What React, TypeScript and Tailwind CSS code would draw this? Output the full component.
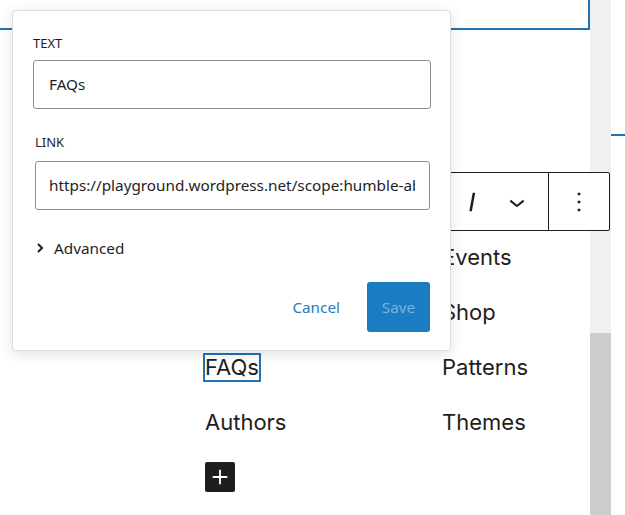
import React from "react";

const ui = { fontFamily: '"Noto Sans", "Open Sans", sans-serif' };
const site = { fontFamily: 'Inter, "Noto Sans", sans-serif' };

const leftItems = ["Docs", "News", "FAQs", "Authors"];
const rightItems = ["Events", "Shop", "Patterns", "Themes"];

const LinkPopover: React.FC = () => {
	return (
		<div
			className="absolute left-[12px] top-[10px] w-[439px] h-[341px] bg-white border border-[#dcdcdc] rounded-[4px] shadow-[0_3px_14px_rgba(0,0,0,0.12)] px-[20px] pt-[23px] text-[#1e1e1e]"
			style={ui}
		>
			<div className="text-[13px] leading-[16px] h-[16px] mt-[1px]">TEXT</div>
			<div className="mt-[9px] h-[49px] border border-[#8f8f8f] rounded-[3px] flex items-center px-[15px] text-[15.3px] w-[398px]">
				FAQs
			</div>

			<div className="text-[13px] leading-[16px] h-[16px] mt-[25px] ml-[2px]">LINK</div>
			<div className="mt-[11px] ml-[2px] h-[49px] w-[395px] border border-[#8f8f8f] rounded-[3px] flex items-center pl-[13px] pr-[14px] text-[15.3px] whitespace-nowrap">
				<span className="overflow-hidden block">https://playground.wordpress.net/scope:humble-abyss</span>
			</div>

			{/* Advanced toggle */}
			<div className="mt-[27px] flex items-center gap-[10px] ml-[2px] h-[22px]">
				<svg width="8" height="12" viewBox="0 0 8 12" className="ml-[1px]">
					<path d="M2 2l4 4-4 4" stroke="#1e1e1e" strokeWidth="2" fill="none" />
				</svg>
				<span className="text-[15.3px]">Advanced</span>
			</div>

			<div className="mt-[23px] flex justify-end items-center gap-[27px]">
				<span className="text-[15.3px] text-[#2b7bb7] mt-[1px]">Cancel</span>
				<div className="w-[63px] h-[50px] rounded-[3px] bg-[#1a7cc1] text-[#78b2dc] text-[15.3px] flex items-center justify-center">
					Save
				</div>
			</div>
		</div>
	);
};

const BlockToolbar: React.FC = () => {
	return (
		<div className="absolute left-[380px] top-[172px] w-[230px] h-[59px] bg-white border border-[#1e1e1e] rounded-[2px] flex">
			<div className="flex-1 flex items-center justify-end pr-[15px] gap-[13px]">
				<svg width="32" height="32" viewBox="0 0 24 24">
					<path d="M12.5 5L10 19h1.9l2.5-14z" fill="#1e1e1e" />
				</svg>
				<svg width="32" height="32" viewBox="0 0 24 24">
					<path d="M17.5 11.6L12 16l-5.5-4.4.9-1.2L12 14l4.5-3.6 1 1.2z" fill="#1e1e1e" />
				</svg>
			</div>
			<div className="w-[61px] border-l border-[#1e1e1e] flex items-center justify-center">
				<svg width="32" height="32" viewBox="0 0 24 24">
					<path d="M13 19h-2v-2h2v2zm0-6h-2v-2h2v2zm0-6h-2V5h2v2z" fill="#1e1e1e" />
				</svg>
			</div>
		</div>
	);
};

export default function App() {
	return (
		<div className="relative w-[625px] h-[515px] overflow-hidden bg-white flex">
			{/* canvas */}
			<div className="w-[590px] flex flex-col">
				<div className="h-[30px] border-b-2 border-r-2 border-[#2271b1]" />
				<div className="pt-[200px] pl-[205px] grid grid-cols-[237px_1fr] text-[22px] text-[#1e1e1e]" style={site}>
					{leftItems.map((item, i) => (
						<React.Fragment key={item}>
							<div className="h-[55px] flex items-center">
								{item === "FAQs" ? (
									<span className="outline-2 outline-[#2271b1] leading-[25px]">{item}</span>
								) : (
									<span>{item}</span>
								)}
							</div>
							<div className="h-[55px] flex items-center">{rightItems[i]}</div>
						</React.Fragment>
					))}
				</div>
				<div className="pl-[205px] mt-[12px]">
					<div className="w-[30px] h-[30px] rounded-[2px] bg-[#1e1e1e] flex items-center justify-center">
						<svg width="22" height="22" viewBox="0 0 24 24">
							<path d="M11 4h2v7h7v2h-7v7h-2v-7H4v-2h7z" fill="#fff" />
						</svg>
					</div>
				</div>
			</div>

			{/* scrollbar */}
			<div className="w-[21px] flex flex-col">
				<div className="h-[333px] bg-[#f0f0f0]" />
				<div className="flex-1 bg-[#cdcdcd]" />
			</div>

			{/* next block edge */}
			<div className="flex-1 pt-[134px]">
				<div className="h-[2px] bg-[#2271b1]" />
			</div>

			<BlockToolbar />
			<LinkPopover />
		</div>
	);
}
